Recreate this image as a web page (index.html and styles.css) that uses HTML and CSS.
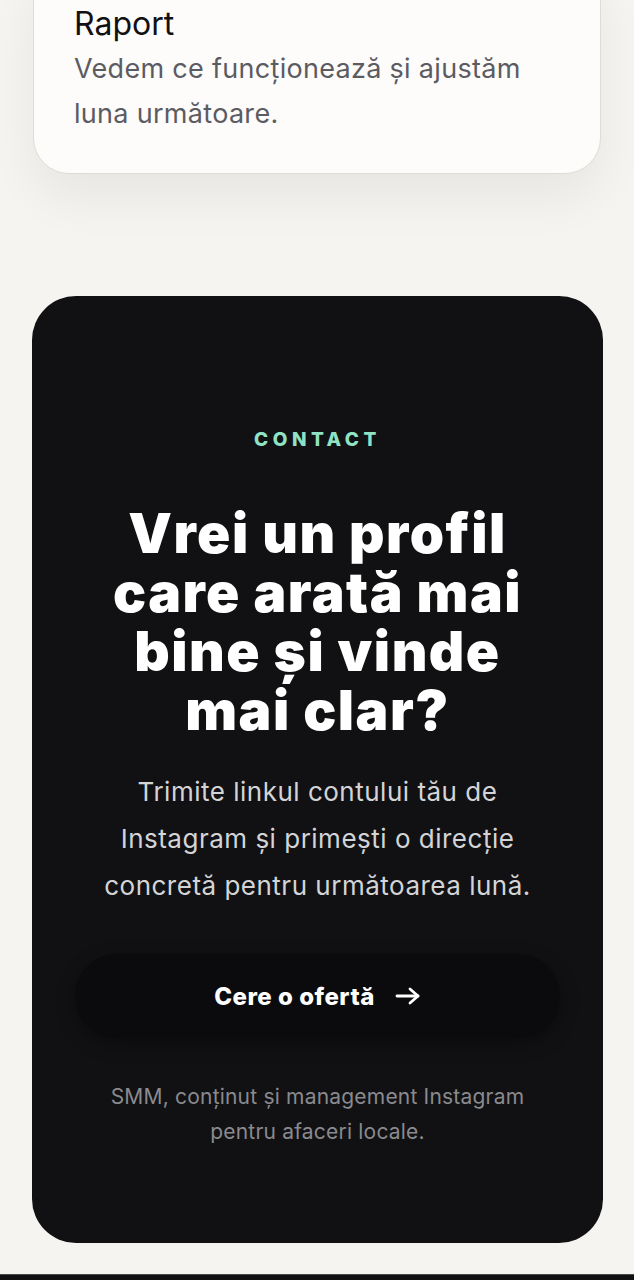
FILE: index.html
```html
<!DOCTYPE html>
<html lang="ro">
<head>
    <meta charset="UTF-8">
    <meta name="viewport" content="width=device-width, initial-scale=1.0">
    <title>Contact</title>
    <link rel="stylesheet" href="styles.css">
</head>
<body>
    <section class="steps">
        <div class="step-card">
            <h3 class="step-title">Raport</h3>
            <p class="step-text">Vedem ce funcționează și ajustăm luna următoare.</p>
        </div>
    </section>

    <section class="contact">
        <div class="contact-card">
            <div class="eyebrow">CONTACT</div>
            <h2 class="contact-title">Vrei un profil care arată mai bine și vinde mai clar?</h2>
            <p class="contact-text">Trimite linkul contului tău de Instagram și primești o direcție concretă pentru următoarea lună.</p>
            <a href="#" class="cta">
                <span>Cere o ofertă</span>
                <svg width="26" height="20" viewBox="0 0 26 20" fill="none" stroke="currentColor" stroke-width="2.8" stroke-linecap="round" stroke-linejoin="round">
                    <path d="M2 10h21"/>
                    <path d="M15 3l8 7-8 7"/>
                </svg>
            </a>
            <p class="contact-note">SMM, conținut și management Instagram pentru afaceri locale.</p>
        </div>
    </section>

    <footer class="site-footer"></footer>
</body>
</html>
```

FILE: styles.css
```css
body {
    margin: 0;
    background: #f5f4f1;
    font-family: Inter, "Noto Sans", sans-serif;
    color: #111113;
}

.steps {
    padding: 0 33px;
}

.step-card {
    margin-top: -40px;
    padding: 44px 40px 37px;
    background: #fdfcfa;
    border: 1px solid #dedcd6;
    border-radius: 36px;
    box-shadow: 0 24px 50px rgba(0, 0, 0, 0.06);
}

.step-title {
    margin: 0;
    font-size: 32px;
    font-weight: 400;
    line-height: 38px;
    color: #111113;
}

.step-text {
    margin: 3px 0 0;
    font-size: 27px;
    letter-spacing: 0.3px;
    line-height: 45px;
    color: #5b5b62;
}

.contact {
    padding: 122px 31px 31px 32px;
}

.contact-card {
    background: #111113;
    border-radius: 44px;
    padding: 132px 43px 94px;
    text-align: center;
}

.eyebrow {
    font-size: 19px;
    font-weight: 800;
    letter-spacing: 4.5px;
    line-height: 24px;
    color: #8fe3c4;
}

.contact-title {
    max-width: 440px;
    margin: 52px auto 0;
    font-size: 55px;
    font-weight: 900;
    line-height: 59px;
    letter-spacing: 1.5px;
    color: #ffffff;
}

.contact-text {
    margin: 28px 0 0;
    font-size: 26px;
    letter-spacing: 0.5px;
    line-height: 47px;
    color: #d4d4d6;
}

.cta {
    margin-top: 45px;
    height: 84px;
    display: flex;
    align-items: center;
    justify-content: center;
    gap: 20px;
    background: #0b0b0d;
    border-radius: 42px;
    box-shadow: 0 6px 18px rgba(0, 0, 0, 0.35);
    color: #ffffff;
    text-decoration: none;
    font-size: 24px;
    font-weight: 800;
    letter-spacing: 0.5px;
}

.contact-note {
    margin: 41px 0 0;
    font-size: 21px;
    letter-spacing: 0.2px;
    line-height: 35px;
    color: #8a8a8e;
}

.site-footer {
    height: 6px;
    background: #111113;
    border-top: 1px solid #4a4a4a;
}
```
